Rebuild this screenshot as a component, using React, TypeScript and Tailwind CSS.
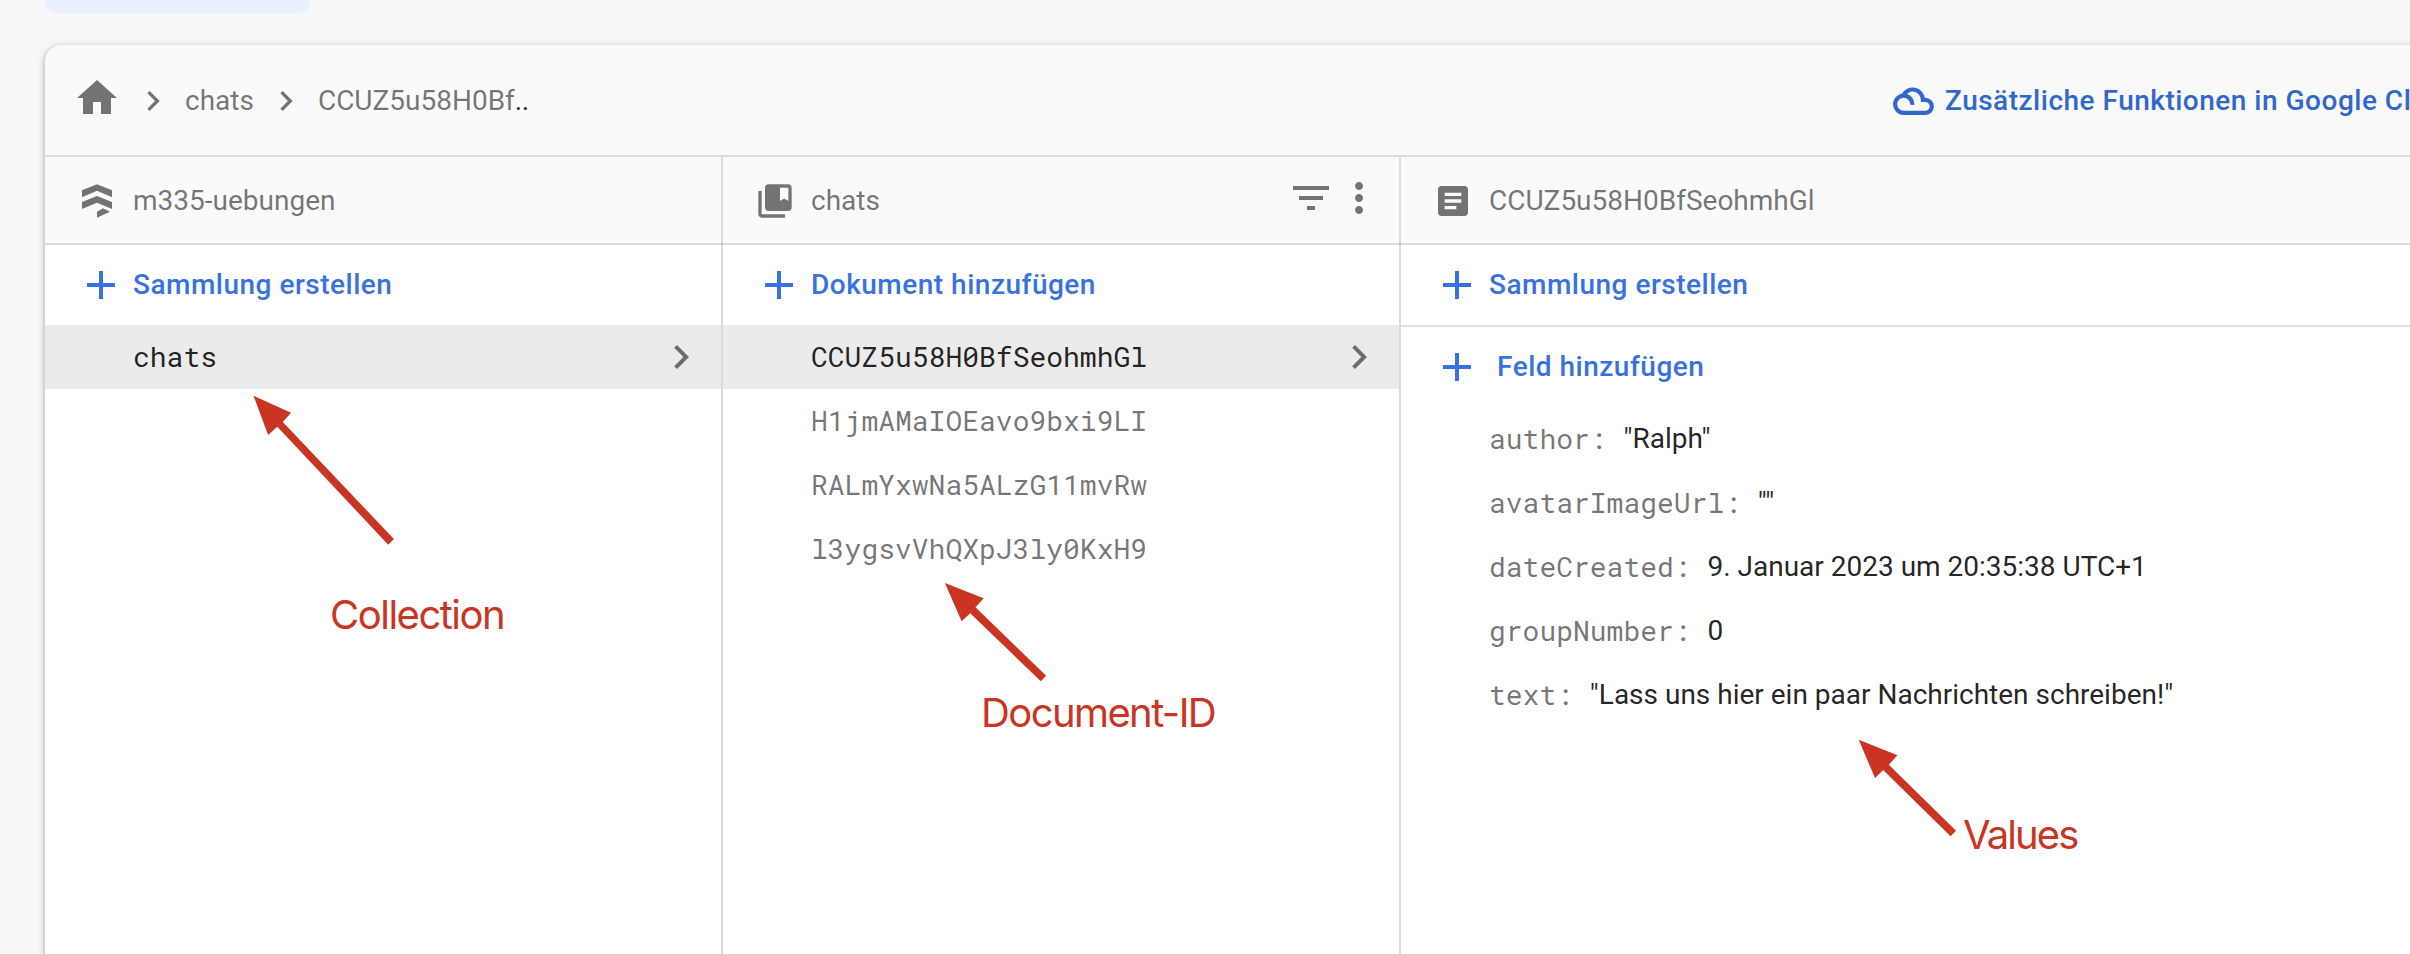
import React from "react";

type IconProps = { d: string; className: string };

const Icon = ({ d, className }: IconProps) => (
  <svg viewBox="0 0 24 24" className={"shrink-0 fill-current " + className}>
    <path d={d} />
  </svg>
);

const HOME = "M10 20v-6h4v6h5v-8h3L12 3 2 12h3v8z";
const CHEVRON = "M10 6L8.59 7.41 13.17 12l-4.58 4.59L10 18l6-6z";
const ADD = "M19 13h-6v6h-2v-6H5v-2h6V5h2v6h6v2z";
const FILTER = "M10 18h4v-2h-4v2zM3 6v2h18V6H3zm3 7h12v-2H6v2z";
const MORE =
  "M12 8c1.1 0 2-.9 2-2s-.9-2-2-2-2 .9-2 2 .9 2 2 2zm0 2c-1.1 0-2 .9-2 2s.9 2 2 2 2-.9 2-2-.9-2-2-2zm0 6c-1.1 0-2 .9-2 2s.9 2 2 2 2-.9 2-2-.9-2-2-2z";
const ARTICLE =
  "M19 3H5c-1.1 0-2 .9-2 2v14c0 1.1.9 2 2 2h14c1.1 0 2-.9 2-2V5c0-1.1-.9-2-2-2zm-5 14H7v-2h7v2zm3-4H7v-2h10v2zm0-4H7V7h10v2z";
const COLLECTION =
  "M4 6H2v14c0 1.1.9 2 2 2h14v-2H4V6zM20 2H8c-1.1 0-2 .9-2 2v12c0 1.1.9 2 2 2h12c1.1 0 2-.9 2-2V4c0-1.1-.9-2-2-2zm0 10l-2.5-1.5L15 12V4h5v8z";

const FirestoreIcon = () => (
  <svg viewBox="0 0 40 40" className="mt-[2px] size-10 shrink-0 fill-current">
    <path d="M20 3.3 35 9.3v7L20 9.7 5 16.3v-7zM20 15 35 21v7L20 21.7 5 28v-7zM20 36.7v-6l6-3.4 7 3.4z" />
  </svg>
);

const CloudIcon = () => (
  <svg viewBox="0 0 41 28" className="mt-[2px] h-7 w-[41px] shrink-0 fill-none stroke-current" strokeWidth="4.2">
    <path d="M19.3 17.8A8.6 8.6 0 1 0 10.7 25.9H32.3A6.5 6.5 0 0 0 32.3 12.9H29.9A10.3 10.3 0 0 0 10.3 8.4" />
  </svg>
);

const PanelHeader = ({ icon, title, children }: { icon: React.ReactNode; title: string; children?: React.ReactNode }) => (
  <div className="-mr-[2px] flex h-[88px] items-center border-b-2 border-black/12 pr-[18px] pl-8 text-black/54">
    {icon}
    <span className="mt-[2px] ml-4 grow">{title}</span>
    {children}
  </div>
);

const Action = ({ label, wide = false }: { label: string; wide?: boolean }) => (
  <div className="flex h-20 items-center pl-8 text-[#3871e2]">
    <Icon d={ADD} className="size-12" />
    <span className={"font-medium tracking-[0.5px] " + (wide ? "ml-4" : "ml-2")}>{label}</span>
  </div>
);

const Row = ({ label, selected = false }: { label: string; selected?: boolean }) => (
  <div
    className={
      "flex h-16 items-center justify-between pr-4 pl-22 font-['Roboto_Mono','Liberation_Mono',monospace] " +
      (selected ? "bg-[#ebebeb] text-black/87" : "text-black/54")
    }
  >
    <span>{label}</span>
    {selected && <Icon d={CHEVRON} className="size-12 text-black/54" />}
  </div>
);

const Field = ({ name, value }: { name: string; value: string }) => (
  <div className="flex h-16 items-center pl-22 whitespace-pre">
    <span className="font-['Roboto_Mono','Liberation_Mono',monospace] text-black/54">{name + ": "}</span>
    <span className="text-black/87">{value}</span>
  </div>
);

const Crumb = ({ children }: { children: React.ReactNode }) => (
  <>
    <Icon d={CHEVRON} className="mx-3 mt-[2px] size-10" />
    <span className="mt-[2px]">{children}</span>
  </>
);

const ARROWS = [
  "253.5,395.7 291.1,412.7 282.8,422 393.9,539 388.2,544.7 277.3,426.7 268.1,435",
  "944.9,583 983.7,598.3 975.5,607.3 1046.1,675.7 1040.8,681.3 970.2,613.3 961.6,621.3",
  "1858.7,739.7 1897.4,755.3 1888.8,764.7 1956.1,830.7 1950.5,836.3 1883.2,770 1875,778",
];

export default function App() {
  return (
    <div className="relative flex h-[954px] w-[2410px] flex-col overflow-hidden bg-[#f6f7f9] pl-[45px] font-['Roboto',sans-serif] text-[28px] leading-10">
      <div className="mb-8 h-[13px] w-[265px] shrink-0 rounded-b-2xl bg-[#e8f0fe]" />
      <div className="-mr-8 flex h-[1000px] shrink-0 flex-col overflow-hidden rounded-2xl bg-[#fafafa] shadow-[0_2px_4px_0_rgba(60,64,67,0.3),0_2px_6px_2px_rgba(60,64,67,0.15)]">
        <div className="flex h-28 shrink-0 items-center border-b-2 border-black/12 pl-7 text-black/54">
          <Icon d={HOME} className="-mt-1 size-12" />
          <Crumb>chats</Crumb>
          <Crumb>
            CCUZ5u58H0Bf<span className="tracking-[-0.5px] text-black/87">..</span>
          </Crumb>
          <div className="mr-[-60px] ml-auto flex w-[609px] items-center gap-[11px] whitespace-nowrap text-[#3168cb]">
            <CloudIcon />
            <span className="mt-[2px] font-medium tracking-[0.5px]">Zusätzliche Funktionen in Google Cloud</span>
          </div>
        </div>

        <div className="flex grow">
          <section className="flex w-[678px] shrink-0 flex-col border-r-2 border-black/12">
            <PanelHeader icon={<FirestoreIcon />} title="m335-uebungen" />
            <div className="grow bg-white">
              <Action label="Sammlung erstellen" />
              <Row label="chats" selected />
            </div>
          </section>

          <section className="flex w-[678px] shrink-0 flex-col border-r-2 border-black/12">
            <PanelHeader icon={<Icon d={COLLECTION} className="mt-[2px] size-10" />} title="chats">
              <Icon d={FILTER} className="-mt-1 size-12" />
              <Icon d={MORE} className="-mt-1 size-12" />
            </PanelHeader>
            <div className="grow bg-white">
              <Action label="Dokument hinzufügen" />
              <Row label="CCUZ5u58H0BfSeohmhGl" selected />
              <Row label="H1jmAMaIOEavo9bxi9LI" />
              <Row label="RALmYxwNa5ALzG11mvRw" />
              <Row label="l3ygsvVhQXpJ3ly0KxH9" />
            </div>
          </section>

          <section className="flex grow flex-col">
            <PanelHeader icon={<Icon d={ARTICLE} className="mt-[2px] size-10" />} title="CCUZ5u58H0BfSeohmhGl" />
            <div className="grow bg-white">
              <div className="border-b-2 border-black/12">
                <Action label="Sammlung erstellen" />
              </div>
              <Action label="Feld hinzufügen" wide />
              <Field name="author" value={'"Ralph"'} />
              <Field name="avatarImageUrl" value={'""'} />
              <Field name="dateCreated" value="9. Januar 2023 um 20:35:38 UTC+1" />
              <Field name="groupNumber" value="0" />
              <Field name="text" value={'"Lass uns hier ein paar Nachrichten schreiben!"'} />
            </div>
          </section>
        </div>
      </div>

      <div className="absolute inset-0 font-['Inter',sans-serif] text-[40px] leading-[48px] font-[420] text-[#ca3523]">
        <svg viewBox="0 0 2410 954" className="absolute inset-0 size-full fill-current">
          {ARROWS.map((points) => (
            <polygon key={points} points={points} />
          ))}
        </svg>
        <span className="absolute top-[591px] left-[330px] tracking-[-1.5px]">Collection</span>
        <span className="absolute top-[689px] left-[981px] tracking-[-1.6px]">Document-ID</span>
        <span className="absolute top-[811px] left-[1963px] tracking-[-1.9px]">Values</span>
      </div>
    </div>
  );
}
